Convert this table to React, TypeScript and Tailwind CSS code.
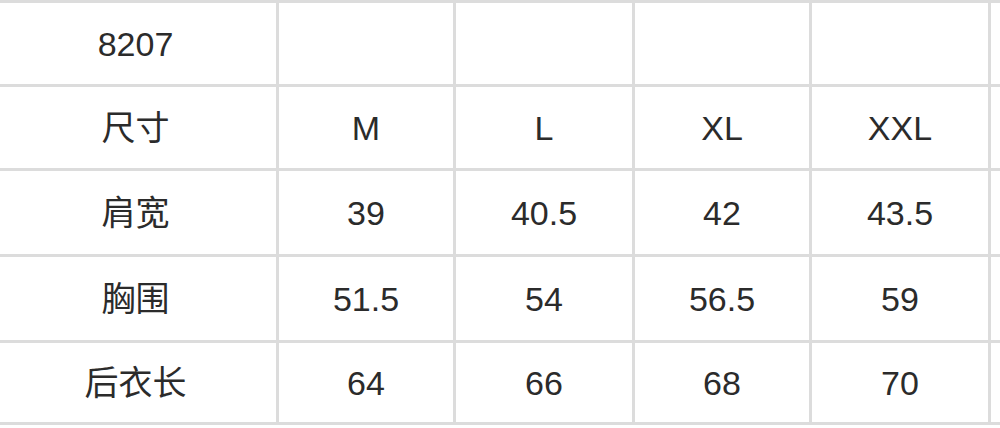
import React from "react";

const rows: string[][] = [
  ["8207", "", "", "", ""],
  ["尺寸", "M", "L", "XL", "XXL"],
  ["肩宽", "39", "40.5", "42", "43.5"],
  ["胸围", "51.5", "54", "56.5", "59"],
  ["后衣长", "64", "66", "68", "70"],
];

const heights = ["h-[81px]", "h-[81px]", "h-[83px]", "h-[83px]", "h-[79px]"];

export default function App() {
  return (
    <div className="w-[1000px] h-[428px] overflow-hidden bg-white">
      <div
        className="-ml-[8px] w-[1030px] grid grid-cols-[281px_174px_176px_174px_176px_1fr] gap-[3px] bg-[#dcdcdc] p-[3px] text-[34px] text-[#2b2b2b]"
        style={{ fontFamily: '"Liberation Sans", "Noto Sans CJK SC", sans-serif' }}
      >
        {rows.map((r, i) => (
          <React.Fragment key={i}>
            {r.map((c, j) => (
              <div
                key={j}
                className={`${heights[i]} bg-white flex items-center justify-center leading-none`}
              >
                {c}
              </div>
            ))}
            <div className={`${heights[i]} bg-white`} />
          </React.Fragment>
        ))}
      </div>
    </div>
  );
}
